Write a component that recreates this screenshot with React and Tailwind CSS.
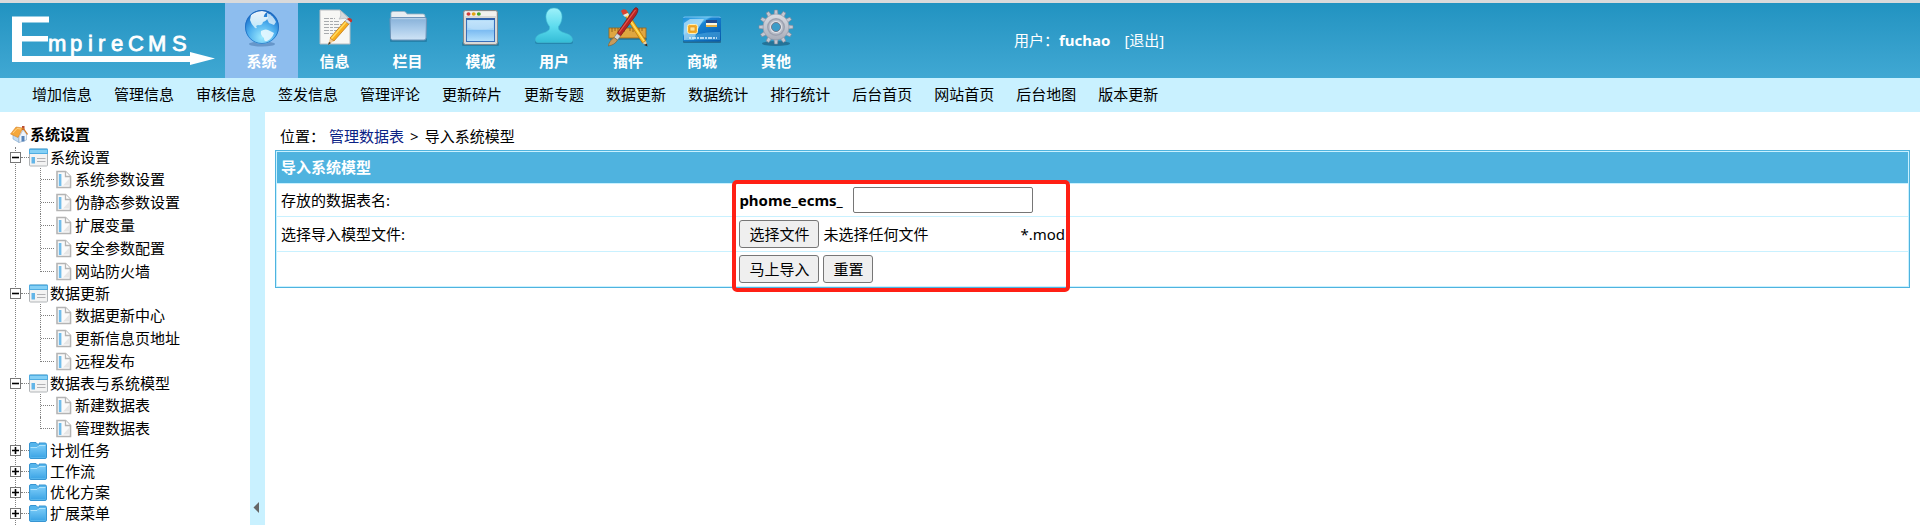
import React from "react";

function GlobeIcon() {
  return (
    <svg viewBox="0 0 40 40" className="size-10" aria-hidden="true">
      <defs>
        <radialGradient id="globe" cx="0.5" cy="0.8" r="0.8">
          <stop offset="0" stopColor="#9deaff" />
          <stop offset="0.5" stopColor="#4fb0ee" />
          <stop offset="0.85" stopColor="#1f78d0" />
          <stop offset="1" stopColor="#1a62ba" />
        </radialGradient>
        <linearGradient id="globeLand" x1="0" y1="0" x2="0" y2="1">
          <stop offset="0" stopColor="#ffffff" />
          <stop offset="1" stopColor="#c9ecfb" />
        </linearGradient>
      </defs>
      <ellipse cx="20" cy="37" rx="13" ry="2.5" fill="#3f6fa5" opacity="0.5" />
      <circle cx="20" cy="20" r="17" fill="url(#globe)" />
      <path
        d="M9 8 Q14 4 20 4 L25 5 Q21 8 22 10 L26 10 Q25 14 21 15 Q20 19 16 18 L14 19 Q16 22 13 21 Q9 17 8 13 Z"
        fill="url(#globeLand)"
        opacity="0.92"
      />
      <path d="M19 24 Q24 21 28 24 L32 26 Q30 32 25 34 Q22 35 22 31 Q18 28 19 24 Z" fill="#e8f8ff" opacity="0.9" />
      <path d="M25 6 Q31 8 34 15 L32 18 L27 16 L25 12 Z" fill="#eef9ff" opacity="0.75" />
      <circle cx="20" cy="20" r="16.5" fill="none" stroke="#1d68bd" strokeWidth="1" opacity="0.7" />
    </svg>
  );
}

function ArticleIcon() {
  return (
    <svg viewBox="0 0 40 40" className="size-10" aria-hidden="true">
      <path d="M5 3 H25 L35 12 V37 H5 Z" fill="#f7f7f5" stroke="#b7bcc0" strokeWidth="1" />
      <path d="M25 3 Q27 9 24 12 Q30 10 35 13 Z" fill="#d7dadc" stroke="#b7bcc0" strokeWidth="0.8" />
      <g stroke="#a8abae" strokeWidth="1" strokeDasharray="5 1 3 1">
        <path d="M9 11.5 H20" />
        <path d="M9 14.5 H25" />
        <path d="M9 17.5 H27" />
        <path d="M9 20.5 H25" />
        <path d="M9 23.5 H22" />
        <path d="M9 26.5 H18" />
      </g>
      <path d="M13 38 L15 31 L19 34 Z" fill="#f0c993" />
      <path d="M13 38 L14 35 L16 36 Z" fill="#443322" />
      <path d="M15 31 L30 14 L34 17 L19 34 Z" fill="#f9ad1d" stroke="#b96f0c" strokeWidth="0.7" />
      <path d="M16.5 31.5 L31 15" stroke="#ffdc62" strokeWidth="1.5" />
      <path d="M30 14 L32 12 L36 15 L34 17 Z" fill="#dfe2e5" stroke="#8e9499" strokeWidth="0.5" />
      <path d="M32 12 Q34 10 36.5 12 Q38 14 36 15.5 Z" fill="#c83229" />
    </svg>
  );
}

function FolderIcon() {
  return (
    <svg viewBox="0 0 40 40" className="size-10" aria-hidden="true">
      <defs>
        <linearGradient id="folderFront" x1="0" y1="0" x2="0" y2="1">
          <stop offset="0" stopColor="#86b0d8" />
          <stop offset="0.45" stopColor="#a6c8e8" />
          <stop offset="1" stopColor="#d0e4f6" />
        </linearGradient>
      </defs>
      <rect x="2" y="31" width="37" height="4" rx="1" fill="#17658c" opacity="0.5" />
      <path d="M3 12 V6 Q3 4.5 5 4.5 H16 Q18 4.5 19 7 H35 Q37 7 37 9 V13 Z" fill="#e8eef2" stroke="#9db3c3" strokeWidth="0.8" />
      <path d="M2 12 Q2 10.5 3.5 10.5 H37 Q38.5 10.5 38.5 12 L38 31 Q38 33 36 33 H4.5 Q2.5 33 2.5 31 Z" fill="url(#folderFront)" stroke="#6e93b8" strokeWidth="1" />
      <path d="M3.5 11.7 H37.5" stroke="#ccdff0" strokeWidth="0.8" />
    </svg>
  );
}

function WindowIcon() {
  return (
    <svg viewBox="0 0 40 40" className="size-10" aria-hidden="true">
      <defs>
        <linearGradient id="windowPane" x1="0" y1="0" x2="0" y2="1">
          <stop offset="0" stopColor="#b9e0fa" />
          <stop offset="0.5" stopColor="#a1d2f7" />
          <stop offset="0.52" stopColor="#7dbcf2" />
          <stop offset="1" stopColor="#b5e1fc" />
        </linearGradient>
      </defs>
      <rect x="1" y="35" width="37" height="4" rx="1" fill="#216b8c" opacity="0.6" />
      <rect x="2.5" y="3.5" width="34" height="34" rx="2" fill="#d9d9d7" stroke="#85898b" />
      <rect x="4" y="4.5" width="31" height="4.5" fill="#f2f1ee" />
      <ellipse cx="7.5" cy="7" rx="2" ry="1.7" fill="#d23a35" />
      <ellipse cx="12.7" cy="7" rx="2" ry="1.7" fill="#e2a30f" />
      <ellipse cx="17.8" cy="7" rx="2" ry="1.7" fill="#46a52b" />
      <rect x="5.5" y="11.5" width="28" height="23" fill="url(#windowPane)" stroke="#386fba" />
      <path d="M5 12 H34" stroke="#2e5faa" strokeWidth="2" />
      <path d="M7 14 H32 V21 Q18 24 7 21 Z" fill="#fff" opacity="0.18" />
    </svg>
  );
}

function UserIcon() {
  return (
    <svg viewBox="0 0 40 40" className="size-10" aria-hidden="true">
      <defs>
        <linearGradient id="userBody" x1="0" y1="0" x2="0" y2="1">
          <stop offset="0" stopColor="#9df1fa" />
          <stop offset="0.55" stopColor="#5cdbee" />
          <stop offset="1" stopColor="#34bcd6" />
        </linearGradient>
      </defs>
      <rect x="1" y="33" width="38" height="4" rx="2" fill="#176d92" opacity="0.5" />
      <path
        d="M20 1 C26 1 28.5 6 28 11 C27.7 15 26 17.5 24.5 19.5 C24 22 25 23.5 28 25 C34 27 38 28 38.5 32.5 Q38.7 35.5 36 35.5 H4 Q1.3 35.5 1.5 32.5 C2 28 6 27 12 25 C15 23.5 16 22 15.5 19.5 C14 17.5 12.3 15 12 11 C11.5 6 14 1 20 1 Z"
        fill="url(#userBody)"
        stroke="#3fbad1"
        strokeWidth="0.6"
      />
    </svg>
  );
}

function ToolsIcon() {
  return (
    <svg viewBox="0 0 40 40" className="size-10" aria-hidden="true">
      <path d="M2 32 H39" stroke="#1b5f80" strokeWidth="2" opacity="0.5" />
      <rect x="1" y="21" width="37" height="10" fill="#dfa640" stroke="#986317" strokeWidth="0.8" />
      <path d="M4 21 V25 M7 21 V24 M10 21 V25 M13 21 V24 M16 21 V25 M22 21 V24 M25 21 V25 M31 21 V25 M34 21 V24" stroke="#805310" strokeWidth="0.8" />
      <path d="M14.5 5 L18 3 L38 34 L34.5 36 Z" fill="#f9bb24" stroke="#a76b0c" strokeWidth="0.7" />
      <path d="M16.5 5 L36 34" stroke="#ffe172" strokeWidth="1.2" />
      <path d="M13 4 Q15 1 18 3 L20 6 L15 8 Z" fill="#d94131" />
      <path d="M15 8 L20 6 L21 8 L17 10 Z" fill="#e7e6e2" />
      <path d="M34.5 36 L38 34 L39.5 39 Z" fill="#f3cb94" />
      <path d="M36 38 L39 36.5 L39.5 39.5 Z" fill="#332b27" />
      <path d="M26 2 Q28 -1 30 2 Q30 5 28 8 L12.5 29 L9 26.5 Z" fill="#b72424" stroke="#741413" strokeWidth="0.7" />
      <path d="M27.5 3 L11 25.500" stroke="#e85a4d" strokeWidth="1.2" />
      <path d="M9 26.5 L12.500 29 L9.500 33 L6 30.500 Z" fill="#d4d8d9" stroke="#737b7e" strokeWidth="0.6" />
      <path d="M6 30.500 L9.500 33 Q7 38 0 39 Q1 34 6 30.500 Z" fill="#c79b5b" stroke="#755326" strokeWidth="0.5" />
    </svg>
  );
}

function CardIcon() {
  return (
    <svg viewBox="0 0 40 40" className="size-10" aria-hidden="true">
      <defs>
        <linearGradient id="cardFace" x1="0" y1="0" x2="1" y2="1">
          <stop offset="0" stopColor="#168bd8" />
          <stop offset="0.35" stopColor="#54b8ee" />
          <stop offset="0.4" stopColor="#1782d2" />
          <stop offset="1" stopColor="#0759a9" />
        </linearGradient>
      </defs>
      <rect x="1" y="33" width="38" height="3" rx="1" fill="#174d70" opacity="0.6" />
      <rect x="1" y="9.5" width="38" height="25" rx="2" fill="url(#cardFace)" />
      <path d="M2 33 V16 L8 12 H22 Q17 20 15 24 L12 33 Z" fill="#bde6fa" opacity="0.7" />
      <path d="M2 33 Q17 24 38 25 V33 Z" fill="#5db9e9" opacity="0.45" />
      <path d="M1.5 11 Q1.5 10 3 10 H37 Q38.5 10 38.5 11" fill="none" stroke="#8ecff3" strokeWidth="0.8" />
      <rect x="24" y="13" width="11" height="3" fill="#234c90" />
      <rect x="24" y="16" width="11" height="2" fill="#fff7df" />
      <rect x="24" y="18" width="11" height="2" fill="#e8b54f" />
      <rect x="5.5" y="17.5" width="10" height="9" rx="2" fill="#f4ae2b" stroke="#fff0b9" />
      <rect x="8" y="20" width="5" height="4" fill="#ffe392" stroke="#d98811" strokeWidth="0.6" />
      <path d="M7 31 H35" stroke="#e0f2fc" strokeWidth="1.7" strokeDasharray="2 1 4 1" />
    </svg>
  );
}

const TEETH = [0, 30, 60, 90, 120, 150, 180, 210, 240, 270, 300, 330];

function GearIcon() {
  return (
    <svg viewBox="0 0 40 40" className="size-10" aria-hidden="true">
      <defs>
        <linearGradient id="gearBody" x1="0" y1="0" x2="0" y2="1">
          <stop offset="0" stopColor="#dadde4" />
          <stop offset="1" stopColor="#a9adb9" />
        </linearGradient>
      </defs>
      <ellipse cx="20" cy="36.5" rx="14" ry="2.5" fill="#17506f" opacity="0.55" />
      {TEETH.map((angle) => (
        <path key={angle} d="M18 8 L18.5 3 H21.5 L22 8 Z" fill="#c5c8d2" stroke="#858a99" strokeWidth="0.6" transform={`rotate(${angle} 20 20)`} />
      ))}
      <circle cx="20" cy="20" r="13" fill="url(#gearBody)" stroke="#8d92a1" strokeWidth="0.6" />
      <circle cx="20" cy="20" r="9" fill="#9da2b0" />
      <circle cx="20" cy="20" r="7.5" fill="#b9bdc8" />
      <circle cx="20" cy="20" r="6" fill="#e3e5ea" />
      <circle cx="20" cy="20" r="4.5" fill="#3c9cc8" stroke="#737a8b" />
    </svg>
  );
}

function Logo() {
  return (
    <svg viewBox="0 0 225 75" className="h-[75px] w-[225px] shrink-0" role="img" aria-label="EmpireCMS">
      <path d="M12 13.5 H49 V19.5 H22 V33 H48 V38.5 H22 V53 H190 V49 L215 55.5 L190 62 V59 H12 Z" fill="#fff" />
      <text
        x="48 70 88 98 111 128 148 172"
        y="48"
        fill="#fff"
        stroke="#fff"
        strokeWidth="0.8"
        fontSize="22"
        fontFamily="Liberation Sans, Arial, sans-serif"
      >
        mpireCMS
      </text>
    </svg>
  );
}

function HomeIcon() {
  return (
    <svg viewBox="0 0 18 18" className="size-[18px]" aria-hidden="true">
      <path d="M3 8 L9 12 V17.5 L3 14 Z" fill="#c4dcf2" stroke="#7ea6cf" strokeWidth="0.6" />
      <path d="M9 12 L13 5 L16.5 9 V15 L9 17.5 Z" fill="#eef4fb" stroke="#8ba8c6" strokeWidth="0.6" />
      <rect x="11.5" y="11" width="3" height="5.5" fill="#5583b9" />
      <path d="M12 1 H14.5 V5 H12 Z" fill="#b84b35" />
      <path d="M0.5 9 L6 2 L13 3 L8 12.5 Z" fill="#f5a83c" stroke="#cc7620" strokeWidth="0.5" />
      <path d="M13 3 L17.5 9.5" stroke="#d47c26" strokeWidth="1.3" />
      <path d="M3 8 L7 3.5 L11 4" stroke="#ffd58b" strokeWidth="0.9" fill="none" />
    </svg>
  );
}

function GroupOpenIcon() {
  return (
    <svg viewBox="0 0 19 19" className="size-[19px]" aria-hidden="true">
      <rect x="0.5" y="1" width="18" height="17" rx="1" fill="#f3f3f3" stroke="#b0b4b7" />
      <path d="M0 6 V1.5 Q0 0.5 1 0.5 H18 Q19 0.5 19 1.5 V6 Z" fill="#4fadE2" />
      <rect x="1" y="2" width="17" height="3" fill="#85d0f5" />
      <rect x="2.5" y="9" width="3.5" height="6.5" fill="#62b5e8" />
      <path d="M8 10.5 H16.5 M8 13.5 H16.5" stroke="#b2b2b5" strokeWidth="1.2" />
    </svg>
  );
}

function GroupClosedIcon() {
  return (
    <svg viewBox="0 0 19 19" className="size-[19px]" aria-hidden="true">
      <defs>
        <linearGradient id="smallFolder" x1="0" y1="0" x2="0" y2="1">
          <stop offset="0" stopColor="#7acbf8" />
          <stop offset="1" stopColor="#3fa6e6" />
        </linearGradient>
      </defs>
      <path d="M0.5 3 Q0.5 1.5 2 1.5 H7 L9 3.5 V4 H10 V2 H16 Q17.5 2 17.5 3.5 V16 Q17.5 17.5 16 17.5 H2 Q0.5 17.5 0.5 16 Z" fill="#55b5ec" stroke="#3795d2" />
      <path d="M1.5 6.5 H8 L10 4.5 H16.5 V16 H1.5 Z" fill="url(#smallFolder)" />
      <path d="M1.5 6.5 H8 L10 4.5 H16.5" fill="none" stroke="#b0e3fc" />
    </svg>
  );
}

function PageIcon() {
  return (
    <svg viewBox="0 0 16 19" className="h-[19px] w-4" aria-hidden="true">
      <path d="M1 1.5 H9.5 L14.5 6.5 V17.5 H1 Z" fill="#fafafa" stroke="#b4b4b4" strokeWidth="1.6" />
      <path d="M9.5 1.5 V6.5 H14.5" fill="#fff" stroke="#b4b4b4" strokeWidth="1.3" />
      <rect x="2.8" y="4" width="2.6" height="12" fill="#72bdeb" />
      <path d="M7 15.5 H13 V9 Z" fill="#e6e6e6" />
    </svg>
  );
}

const MENU = [
  { label: "系统", icon: GlobeIcon, width: "w-[73px]", active: true },
  { label: "信息", icon: ArticleIcon, width: "w-[73px]" },
  { label: "栏目", icon: FolderIcon, width: "w-[73px]" },
  { label: "模板", icon: WindowIcon, width: "w-[73px]" },
  { label: "用户", icon: UserIcon, width: "w-[74px]" },
  { label: "插件", icon: ToolsIcon, width: "w-[74px]" },
  { label: "商城", icon: CardIcon, width: "w-[74px]" },
  { label: "其他", icon: GearIcon, width: "w-[74px]" },
];

const SHORTCUTS = [
  "增加信息", "管理信息", "审核信息", "签发信息", "管理评论", "更新碎片", "更新专题",
  "数据更新", "数据统计", "排行统计", "后台首页", "网站首页", "后台地图", "版本更新",
];

const TREE = [
  { label: "系统设置", items: ["系统参数设置", "伪静态参数设置", "扩展变量", "安全参数配置", "网站防火墙"] },
  { label: "数据更新", items: ["数据更新中心", "更新信息页地址", "远程发布"] },
  { label: "数据表与系统模型", items: ["新建数据表", "管理数据表"] },
  { label: "计划任务" },
  { label: "工作流" },
  { label: "优化方案" },
  { label: "扩展菜单" },
];

function Header() {
  return (
    <header className="flex h-[78px] shrink-0 items-stretch border-t-[3px] border-[#d9dadb] bg-linear-to-b from-[#2193c1] to-[#40a8d3] text-white">
      <Logo />
      <nav className="flex shrink-0">
        {MENU.map(({ label, icon: Icon, width, active }) => (
          <a key={label} href="#" className={`flex flex-col items-center pt-1 font-bold ${width} ${active ? "bg-[#8dbdee]" : ""}`}>
            <Icon />
            <span className="mt-1">{label}</span>
          </a>
        ))}
      </nav>
      <p className="ml-[201px] self-center pb-0.5 whitespace-pre">
        用户：<b>fuchao</b>
        <a href="#" className="ml-3.5">[退出]</a>
      </p>
    </header>
  );
}

function TreeGroup({ label, items }) {
  return (
    <li>
      <div className="flex h-[21px] items-center">
        <button
          type="button"
          aria-label={label}
          aria-expanded={Boolean(items)}
          className="-ml-[6px] flex size-[11px] items-center justify-center border border-[#777777] bg-white"
        >
          <svg viewBox="0 0 7 7" className="size-[7px]" aria-hidden="true">
            <path d={items ? "M0 3.5 H7" : "M0 3.5 H7 M3.5 0 V7"} stroke="#000" strokeWidth="1.6" />
          </svg>
        </button>
        <span className="w-2 border-t border-dotted border-[#808080]" />
        {items ? <GroupOpenIcon /> : <GroupClosedIcon />}
        <a href="#" className="ml-0.5 pb-0.5">{label}</a>
      </div>
      {items && (
        <ul className="ml-6">
          {items.map((item, i) => (
            <li key={item} className="flex h-[23px] items-center">
              <span className={`self-start border-l border-dotted border-[#808080] ${i === items.length - 1 ? "h-3" : "h-full"}`} />
              <span className="mr-0.5 w-[13px] border-t border-dotted border-[#808080]" />
              <PageIcon />
              <a href="#" className="ml-[3px] pb-0.5">{item}</a>
            </li>
          ))}
        </ul>
      )}
    </li>
  );
}

function Sidebar() {
  return (
    <aside className="flex w-[250px] shrink-0 flex-col pt-[11px]">
      <div className="ml-[10px] flex h-6 items-center gap-0.5 pb-0.5 font-bold">
        <HomeIcon />
        系统设置
      </div>
      <ul className="ml-[15px] grow border-l border-dotted border-[#808080]">
        {TREE.map((group) => (
          <TreeGroup key={group.label} {...group} />
        ))}
      </ul>
    </aside>
  );
}

const BUTTON = "flex h-7 items-center rounded-[3px] border border-[#767676] bg-[#efefef] px-[9px]";

function ImportForm() {
  return (
    <form className="relative" onSubmit={(e) => e.preventDefault()}>
      <table className="w-full table-fixed border-separate border-spacing-px border border-[#4fb3df] bg-[#c9f1ff]">
        <colgroup>
          <col className="w-[28%]" />
          <col />
        </colgroup>
        <thead>
          <tr>
            <th colSpan={2} className="h-[31px] bg-[#4fb3df] px-1 pt-0 pb-0.5 text-left font-bold text-white">导入系统模型</th>
          </tr>
        </thead>
        <tbody>
          <tr className="bg-white">
            <td className="h-8 px-1 py-0">
              <label htmlFor="table-name">存放的数据表名:</label>
            </td>
            <td className="px-[5px] py-0">
              <div className="flex items-center gap-[10px]">
                <b>phome_ecms_</b>
                <input id="table-name" type="text" className="h-[26px] w-[180px] rounded-xs border border-[#767676] bg-white px-1" />
              </div>
            </td>
          </tr>
          <tr className="bg-white">
            <td className="h-[34px] px-1 py-0">
              <label htmlFor="model-file">选择导入模型文件:</label>
            </td>
            <td className="px-[5px] py-0">
              <div className="flex items-center">
                <input id="model-file" type="file" accept=".mod" className="sr-only" />
                <label htmlFor="model-file" className={BUTTON}>选择文件</label>
                <span className="ml-1 w-[197px]">未选择任何文件</span>
                <span>*.mod</span>
              </div>
            </td>
          </tr>
          <tr className="bg-white">
            <td className="h-[34px] px-1 py-0" />
            <td className="px-[5px] py-0">
              <div className="flex gap-1">
                <button type="submit" className={BUTTON}>马上导入</button>
                <button type="reset" className={BUTTON}>重置</button>
              </div>
            </td>
          </tr>
        </tbody>
      </table>
      <div className="pointer-events-none absolute top-[30px] left-[28%] -ml-px h-28 w-[338px] rounded-[5px] border-4 border-[#ff2015]" />
    </form>
  );
}

export default function App() {
  return (
    <div className="flex min-h-screen flex-col bg-white font-['Noto_Sans','Noto_Sans_CJK_SC',sans-serif] text-[15px] leading-5 text-black">
      <Header />
      <nav className="flex h-[34px] shrink-0 items-center gap-[22px] bg-[#c9f1ff] px-8 pb-0.5 whitespace-nowrap">
        {SHORTCUTS.map((label) => (
          <a key={label} href="#">{label}</a>
        ))}
      </nav>
      <div className="flex grow">
        <Sidebar />
        <button type="button" aria-label="收起菜单" className="flex w-[15px] shrink-0 items-end bg-[#c9f1ff] pb-3 pl-[3px]">
          <svg viewBox="0 0 6 11" className="h-[11px] w-1.5" aria-hidden="true">
            <path d="M6 0 V11 L0.5 5.5 Z" fill="#666" />
          </svg>
        </button>
        <main className="min-w-0 grow px-[10px] pt-[14px]">
          <p className="flex h-6 pl-[5px]">
            位置：
            <a href="#" className="mr-1.5 ml-1 text-[#0a2285]">管理数据表</a>
            <span className="mr-1.5">&gt;</span>
            导入系统模型
          </p>
          <ImportForm />
        </main>
      </div>
    </div>
  );
}
